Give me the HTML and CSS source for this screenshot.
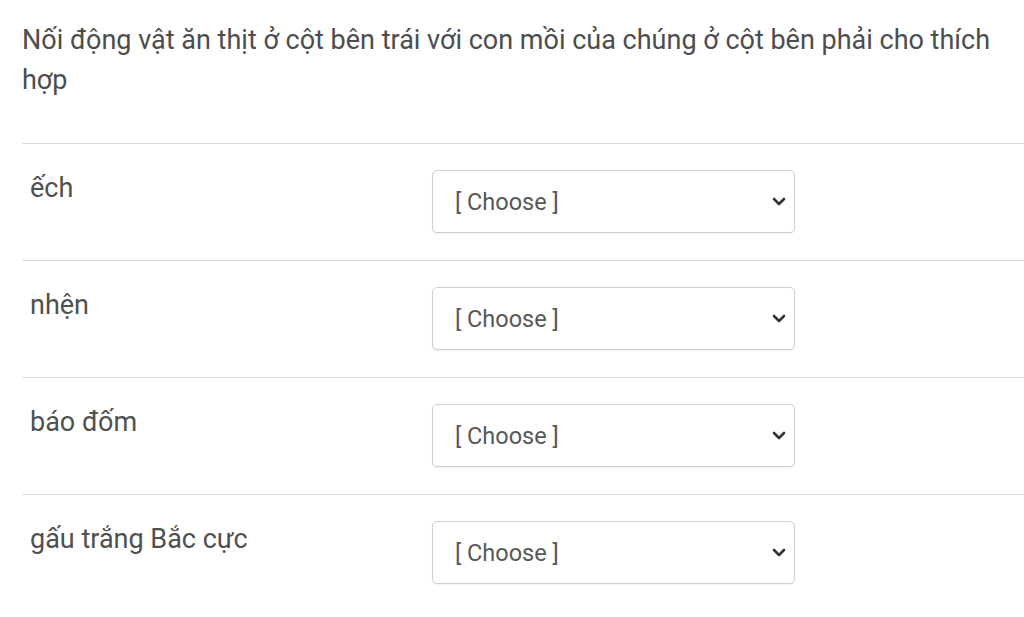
FILE: index.html
```html
<!DOCTYPE html>
<html lang="vi">
<head>
<meta charset="utf-8">
<link rel="stylesheet" href="styles.css">
</head>
<body>
<div class="page">
  <p class="question">Nối động vật ăn thịt ở cột bên trái với con mồi của chúng ở cột bên phải cho thích hợp</p>
  <div class="rows">
    <div class="row">
      <div class="label">ếch</div>
      <div class="select-wrap">
        <select class="choose"><option>[ Choose ]</option></select>
        <svg class="chev" viewBox="0 0 14 9" width="14" height="9"><path d="M2 2 L7 7 L12 2" fill="none" stroke="#333" stroke-width="2.6" stroke-linecap="round" stroke-linejoin="round"/></svg>
      </div>
    </div>
    <div class="row">
      <div class="label">nhện</div>
      <div class="select-wrap">
        <select class="choose"><option>[ Choose ]</option></select>
        <svg class="chev" viewBox="0 0 14 9" width="14" height="9"><path d="M2 2 L7 7 L12 2" fill="none" stroke="#333" stroke-width="2.6" stroke-linecap="round" stroke-linejoin="round"/></svg>
      </div>
    </div>
    <div class="row">
      <div class="label">báo đốm</div>
      <div class="select-wrap">
        <select class="choose"><option>[ Choose ]</option></select>
        <svg class="chev" viewBox="0 0 14 9" width="14" height="9"><path d="M2 2 L7 7 L12 2" fill="none" stroke="#333" stroke-width="2.6" stroke-linecap="round" stroke-linejoin="round"/></svg>
      </div>
    </div>
    <div class="row">
      <div class="label">gấu trắng Bắc cực</div>
      <div class="select-wrap">
        <select class="choose"><option>[ Choose ]</option></select>
        <svg class="chev" viewBox="0 0 14 9" width="14" height="9"><path d="M2 2 L7 7 L12 2" fill="none" stroke="#333" stroke-width="2.6" stroke-linecap="round" stroke-linejoin="round"/></svg>
      </div>
    </div>
  </div>
</div>
</body>
</html>
```
FILE: styles.css
```css
html, body {
  margin: 0;
  padding: 0;
  background: #fff;
}
body {
  font-family: Roboto, "Noto Sans", sans-serif;
  color: #4a4a4a;
}
.page {
  padding-left: 22px;
}
.question {
  margin: 20px 0 43px 0;
  font-size: 27px;
  line-height: 40px;
  color: #4d4d4d;
}
.row {
  border-top: 1px solid #dcdcdc;
  height: 116px;
  display: flex;
  align-items: flex-start;
}
.label {
  width: 402px;
  padding-left: 8px;
  padding-top: 24px;
  font-size: 27px;
  line-height: 40px;
  color: #505050;
}
.select-wrap {
  position: relative;
  margin-top: 26px;
  width: 363px;
  height: 63px;
}
.choose {
  appearance: none;
  -webkit-appearance: none;
  width: 100%;
  height: 100%;
  box-sizing: border-box;
  border: 1px solid #cfcfcf;
  border-radius: 5px;
  background: #fff;
  padding: 0 0 0 22px;
  font-family: Roboto, "Noto Sans", sans-serif;
  font-size: 23.5px;
  color: #585858;
  box-shadow: 0 1px 2px rgba(0,0,0,0.06);
}
.chev {
  position: absolute;
  right: 9px;
  top: 27px;
  pointer-events: none;
}
```
